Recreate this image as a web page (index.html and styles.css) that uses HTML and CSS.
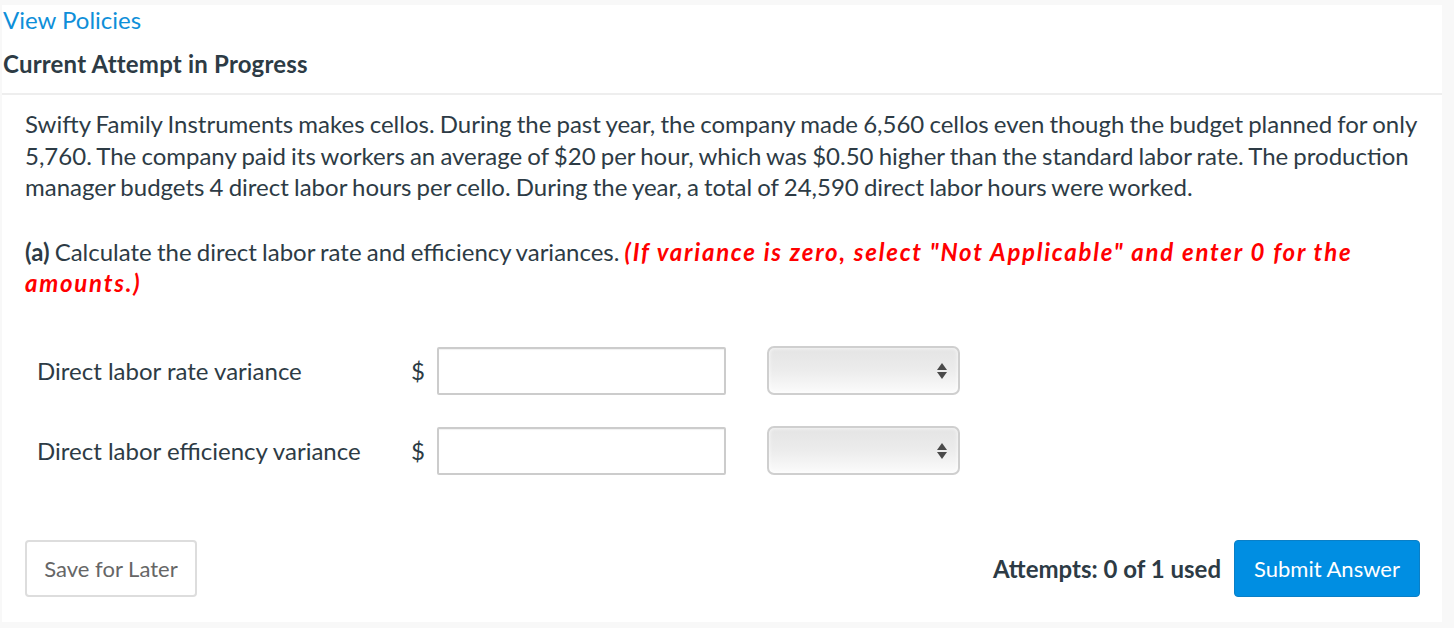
FILE: index.html
```html
<!DOCTYPE html>
<html lang="en">
<head>
<meta charset="utf-8">
<title>Current Attempt in Progress</title>
<link rel="stylesheet" href="styles.css">
</head>
<body>
<div class="panel">
  <header class="head">
    <a class="policies" href="#">View Policies</a>
    <h2 class="attempt-title">Current Attempt in Progress</h2>
  </header>
  <section class="question">
    <p class="stem">Swifty Family Instruments makes cellos. During the past year, the company made 6,560 cellos even though the budget planned for only 5,760. The company paid its workers an average of $20 per hour, which was $0.50 higher than the standard labor rate. The production manager budgets 4 direct labor hours per cello. During the year, a total of 24,590 direct labor hours were worked.</p>
    <p class="part"><b>(a)</b> Calculate the direct labor rate and efficiency variances. <span class="note">(If variance is zero, select "Not Applicable" and enter 0 for the amounts.)</span></p>
    <div class="rows">
      <div class="row">
        <span class="label">Direct labor rate variance</span>
        <span class="cur">$</span>
        <input class="amount" type="text">
        <span class="select"><span class="arrows"><i class="up"></i><i class="down"></i></span></span>
      </div>
      <div class="row">
        <span class="label">Direct labor efficiency variance</span>
        <span class="cur">$</span>
        <input class="amount" type="text">
        <span class="select"><span class="arrows"><i class="up"></i><i class="down"></i></span></span>
      </div>
    </div>
    <div class="actions">
      <button class="btn save">Save for Later</button>
      <div class="right">
        <span class="used">Attempts: 0 of 1 used</span>
        <button class="btn submit">Submit Answer</button>
      </div>
    </div>
  </section>
</div>
</body>
</html>
```

FILE: styles.css
```css
html, body {
  margin: 0;
  padding: 0;
  background: #f8f8f8;
}
body {
  font-family: Lato, "Open Sans", sans-serif;
  color: #2d3b45;
}
.panel {
  margin: 5px 12px 0 2px;
  height: 617px;
  background: #fff;
  display: flex;
  flex-direction: column;
}
.head {
  padding: 0 0 0 1px;
  border-bottom: 2px solid #eeeeee;
  height: 88px;
}
.policies {
  display: block;
  font-size: 24px;
  line-height: 30px;
  color: #0e8fd9;
  text-decoration: none;
}
.attempt-title {
  margin: 15px 0 0;
  font-size: 24px;
  line-height: 28px;
  font-weight: 700;
  letter-spacing: 0.2px;
}
.question {
  padding: 13px 22px 0 23px;
  flex: 1;
  display: flex;
  flex-direction: column;
}
.stem, .part {
  margin: 0;
  font-size: 24px;
  line-height: 31.5px;
  word-spacing: -1px;
}
.part {
  margin-top: 33px;
}
.part b {
  font-weight: 700;
}
.note {
  color: #ff0000;
  font-weight: 700;
  font-style: italic;
  letter-spacing: 1.75px;
  word-spacing: 0;
}
.rows {
  margin-top: 48px;
  padding-left: 12px;
  display: flex;
  flex-direction: column;
  gap: 32px;
}
.row {
  display: flex;
  align-items: center;
  height: 48px;
}
.label {
  width: 374px;
  font-size: 24px;
}
.cur {
  width: 26px;
  font-size: 24px;
}
.amount {
  box-sizing: border-box;
  width: 289px;
  height: 48px;
  border: 2px solid #cccccc;
  border-radius: 2px;
  box-shadow: inset 0 1px 1px rgba(0,0,0,0.06);
  margin: 0;
  padding: 4px 8px;
  font: inherit;
}
.select {
  box-sizing: border-box;
  margin-left: 41px;
  width: 193px;
  height: 49px;
  border: 2px solid #cfcfcf;
  border-radius: 7px;
  background: linear-gradient(#e4e4e4 0%, #ececec 50%, #fbfbfb 100%);
  box-shadow: inset 0 0 4px rgba(255,255,255,0.9);
  display: flex;
  align-items: center;
  justify-content: flex-end;
  padding-right: 11px;
}
.arrows {
  display: flex;
  flex-direction: column;
  gap: 2px;
}
.arrows i {
  display: block;
  width: 0;
  height: 0;
  border-left: 5px solid transparent;
  border-right: 5px solid transparent;
}
.arrows .up { border-bottom: 7px solid #4a4a4a; }
.arrows .down { border-top: 7px solid #4a4a4a; }
.actions {
  margin-top: 65px;
  display: flex;
  justify-content: space-between;
  align-items: center;
}
.right {
  display: flex;
  align-items: center;
  gap: 13px;
}
.btn {
  box-sizing: border-box;
  height: 57px;
  font-family: inherit;
  font-size: 22px;
  border-radius: 4px;
  cursor: pointer;
}
.save {
  width: 172px;
  background: #fff;
  border: 2px solid #dddddd;
  color: #666666;
}
.used {
  font-size: 24px;
  font-weight: 700;
}
.submit {
  width: 186px;
  background: #008ee2;
  border: 1px solid #0a7fc6;
  color: #fff;
}
```
